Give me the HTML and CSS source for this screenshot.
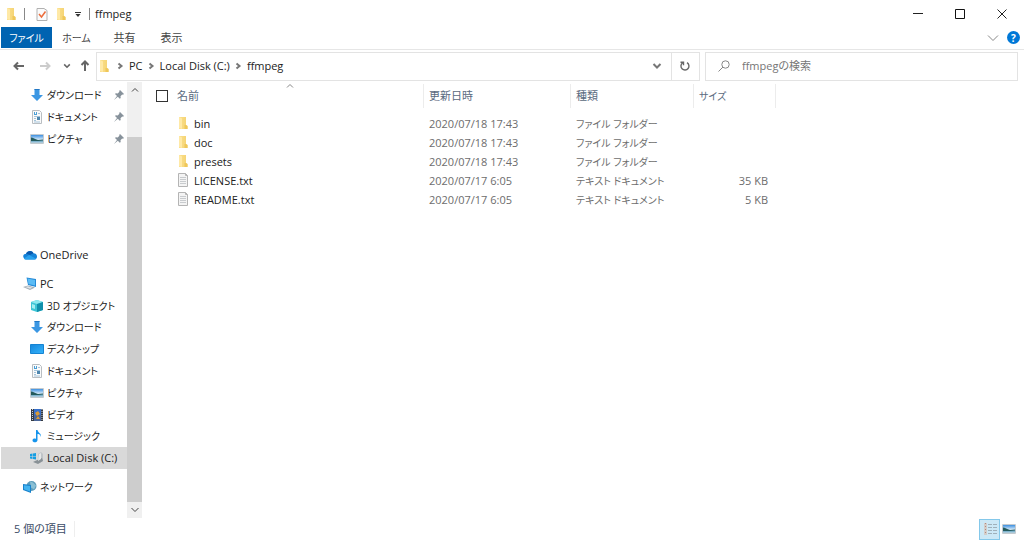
FILE: index.html
```html
<!DOCTYPE html>
<html lang="ja">
<head>
<meta charset="utf-8">
<meta name="viewport" content="width=device-width, initial-scale=1">
<title>ffmpeg</title>
<link rel="stylesheet" href="styles.css">
</head>
<body>
<svg class="sprite" aria-hidden="true">
  <defs>
    <linearGradient id="g-fold" x1="0" x2="1"><stop offset="0" stop-color="#fbe08c"/><stop offset="1" stop-color="#f4d271"/></linearGradient>
    <linearGradient id="g-blue" x1="0" x2="1" y1="0" y2="1"><stop offset="0" stop-color="#1687dc"/><stop offset="1" stop-color="#35b4fb"/></linearGradient>
    <linearGradient id="g-sky" x1="0" x2="0" y1="0" y2="1"><stop offset="0" stop-color="#3c8fe0"/><stop offset="1" stop-color="#e4f2fb"/></linearGradient>
  </defs>
  <symbol id="folder" viewBox="0 0 14 14"><path d="M3 1h7v8l1.500 1v3H3z" fill="url(#g-fold)"/><path d="M8.500 9h1.500l1.500 1v3h-3z" fill="#efc75a"/><path d="M3 1l3 1.500V13l-3-1z" fill="#ffe9a6"/></symbol>
  <symbol id="text" viewBox="0 0 14 14"><path d="M2.500.500h7l2 2v11h-9z" fill="#f4f4f4" stroke="#b4b4b4"/><path d="M9.500.500v2h2" fill="none" stroke="#b4b4b4"/><path d="M4 4.500h6M4 6.500h6M4 8.500h6M4 10.500h6" stroke="#c8cbce"/></symbol>
  <symbol id="down" viewBox="0 0 14 14"><path d="M4.500 1h5v6H13l-6 6-6-6h3.500z" fill="#3b97e3"/><path d="M4.500 1h5v1h-5z" fill="#2277c4"/></symbol>
  <symbol id="doc" viewBox="0 0 14 14"><path d="M2.500.500h7l2 2v11h-9z" fill="#fafafa" stroke="#b9bec2"/><path d="M4 2h1v3H4zM5 4h1v1H5zM6 2h1v3H6z" fill="#4c9fd6"/><path d="M8 3.500h2M4 6.500h6M4 8.500h2M4 10.500h2M4 12h6" stroke="#a5c4da"/><path d="M7 7h3v3H7z" fill="#4d86ae"/></symbol>
  <symbol id="picture" viewBox="0 0 14 14"><path d="M.5 2.500h13v9H.5z" fill="#fff" stroke="#c3cacf"/><path d="M1 3h12v5H1z" fill="url(#g-sky)"/><path d="M1 8h12v3H1z" fill="#7fb3cd"/><path d="M1 5.500c2 0 4 1.500 7 2.500l5-.5v1L8 9H1z" fill="#235a5c"/><path d="M1 10h12v1H1z" fill="#a9c9da"/></symbol>
  <symbol id="cloud" viewBox="0 0 16 14"><path d="M1 10.500c-2-3 .5-5 2.500-5C5 2 10 1 12 5c3 0 4 2 4 4 0 1.500-1 3-2.500 3H3c-1 0-1.600-.7-2-1.500" fill="#1583d8"/><path d="M3.500 5.500C5 2 10 1 12 5L8 7z" fill="#0a59ad"/><path d="M1 11l6-4 8 4.300c-.5.500-1 .7-2 .7H3c-1 0-1.500-.4-2-1" fill="#29a2ee"/></symbol>
  <symbol id="pc" viewBox="0 0 14 14"><path d="M3.500.500L13 2v8L5 8z" fill="#2589d6"/><path d="M4.500 1.500L12 3v5.500L5.500 7z" fill="#5bbcf5"/><path d="M0 10l5-1.500 7 2L7 13z" fill="#a3adb5"/><path d="M2 10l3-.8 4.500 1.500-2.500 1z" fill="#dfe3e6"/></symbol>
  <symbol id="cube" viewBox="0 0 14 14"><path d="M1 3l6-2 6 2v8l-6 2-6-2z" fill="#3cc5d6"/><path d="M1 3l6-2 6 2-6 2z" fill="#8de9ef"/><path d="M7 5l6-2v8l-6 2z" fill="#1190ab"/><path d="M2 5l3 1v4l-3-1z" fill="#a4eef0"/></symbol>
  <symbol id="desktop" viewBox="0 0 14 14"><path d="M.5 2.500h13v9H.5z" fill="url(#g-blue)" stroke="#1684d3"/></symbol>
  <symbol id="video" viewBox="0 0 14 14"><path d="M1 1h12v12H1z" fill="#343b43"/><path d="M4 1h7v6H4z" fill="#3670cb"/><path d="M4 7h7v6H4z" fill="#4b6698"/><path d="M5 5l3-2 2 3-3 2zM6 11l2-3 2 3z" fill="#dc9a32"/><path d="M2.500 1v12M12 1v12" stroke="#c8d0d7" stroke-dasharray="1 1"/></symbol>
  <symbol id="music" viewBox="0 0 14 14"><path d="M6 1h1.500c.5 3 4 3 3.500 7-1-3-2-3-3.500-3v6c0 3-5 3-5 .5C2.500 9.500 5 9 6 10z" fill="#1594ec"/></symbol>
  <symbol id="disk" viewBox="0 0 14 14"><path d="M8 3l3-2 2 2v7l-5 2z" fill="#bfc4c8"/><path d="M5 10l7-3 1 3-5 3-5-2z" fill="#899196"/><path d="M9 3l2-1v6l-3 2z" fill="#e5e7e8"/><path d="M0 3l2.500-.5V5H0zM3 2.500L6 2v3H3zM0 5.500h2.500V8L0 7.500zM3 5.500h3v3L3 8z" fill="#159ee3"/></symbol>
  <symbol id="network" viewBox="0 0 14 14"><circle cx="8.500" cy="6" r="5" fill="#5b9bb9"/><path d="M7 1.500l3 1 3 3-2 4-3-2z" fill="#8abfd4"/><path d="M0 4l8 1v8L0 10z" fill="#1681cc"/><path d="M1 5.200l6 .8v5.500L1 9.300z" fill="#43b3f0"/></symbol>
  <symbol id="pin" viewBox="0 0 10 10"><path d="M6 0l4 4-1 .7-.8-.3-1.700 1.800.2 1.800-.9.800-2-2L0 10l3-3.900-2-2 .8-.8 1.900.2 1.700-1.700-.2-.9z" fill="#87929b"/></symbol>
  <symbol id="chev-d" viewBox="0 0 10 10"><path d="M1.500 3L5 6.500 8.500 3" fill="none" stroke="currentColor"/></symbol>
  <symbol id="chev-u" viewBox="0 0 10 10"><path d="M2 6.500l3-3 3 3" fill="none" stroke="currentColor"/></symbol>
  <symbol id="chev-r" viewBox="0 0 10 10"><path d="M3.500 2.500L6.500 5l-3 2.500" fill="none" stroke="currentColor"/></symbol>
  <symbol id="arrow" viewBox="0 0 12 12"><path d="M11 6H1.500M5 2.500L1.500 6 5 9.500" fill="none" stroke="currentColor"/></symbol>
</svg>

<div class="window">
  <header class="titlebar">
    <svg class="icon"><use href="#folder"/></svg>
    <span class="rule"></span>
    <button class="quick" aria-label="プロパティ"><svg class="icon" viewBox="0 0 14 14"><path d="M2 1.500h7l3 2v10H2z" fill="#fbfbfb" stroke="#b1b1b1"/><path d="M4 7l2.500 3L10.500 4.500" fill="none" stroke="#ec6c3a" stroke-width="1.500"/></svg></button>
    <button class="quick" aria-label="新しいフォルダー"><svg class="icon"><use href="#folder"/></svg></button>
    <button class="quick" aria-label="カスタマイズ"><svg class="icon small" viewBox="0 0 10 10"><path d="M2 3.500h6" stroke="#333"/><path d="M2.500 5h5L5 8z" fill="#333"/></svg></button>
    <span class="rule dark"></span>
    <h1 class="title">ffmpeg</h1>
    <div class="controls">
      <button aria-label="最小化"><svg class="ctl" viewBox="0 0 10 10"><path d="M0 4.500h10" stroke="#222"/></svg></button>
      <button aria-label="最大化"><svg class="ctl" viewBox="0 0 10 10"><path d="M.5.500h9v9h-9z" fill="none" stroke="#111"/></svg></button>
      <button aria-label="閉じる"><svg class="ctl" viewBox="0 0 10 10"><path d="M.5.500l9 9M9.500.500l-9 9" stroke="#222"/></svg></button>
    </div>
  </header>

  <nav class="ribbon" aria-label="リボン">
    <button class="tab active kana">ファイル</button>
    <button class="tab kana">ホーム</button>
    <button class="tab">共有</button>
    <button class="tab">表示</button>
    <button class="expand" aria-label="リボンの展開"><svg class="icon" viewBox="0 0 14 14"><path d="M2 4.500l5 5 5-5" fill="none" stroke="#888"/></svg></button>
    <button class="help" aria-label="ヘルプ">?</button>
  </nav>

  <div class="address">
    <button class="nav" aria-label="戻る"><svg class="arrow"><use href="#arrow"/></svg></button>
    <button class="nav off" aria-label="進む"><svg class="arrow forward"><use href="#arrow"/></svg></button>
    <button class="nav narrow" aria-label="履歴"><svg class="mini"><use href="#chev-d"/></svg></button>
    <button class="nav narrow" aria-label="上へ"><svg class="arrow up"><use href="#arrow"/></svg></button>
    <div class="path">
      <svg class="icon"><use href="#folder"/></svg>
      <svg class="mini sep"><use href="#chev-r"/></svg><a href="#pc">PC</a>
      <svg class="mini sep"><use href="#chev-r"/></svg><a href="#c">Local Disk (C:)</a>
      <svg class="mini sep"><use href="#chev-r"/></svg><a href="#ffmpeg">ffmpeg</a>
      <button class="drop" aria-label="以前の場所"><svg class="mini heavy"><use href="#chev-d"/></svg></button>
      <button class="reload" aria-label="最新の情報に更新"><svg class="arrow" viewBox="0 0 12 12"><path d="M8 2.600A4 4 0 1 1 3.600 2.800M1.500 2.200h3v3" fill="none" stroke="#666" stroke-width="1.400"/></svg></button>
    </div>
    <label class="search">
      <svg class="lens" viewBox="0 0 12 12"><circle cx="7.500" cy="4.500" r="3.700" fill="none" stroke="#888"/><path d="M5 7L.5 11.500" stroke="#888"/></svg>
      <input type="text" placeholder="ffmpegの検索" aria-label="ffmpegの検索">
    </label>
  </div>

  <div class="body">
    <aside class="side">
      <nav class="tree" aria-label="ナビゲーション">
        <ul class="pinned">
          <li><a class="item sub kana" href="#dl"><svg class="icon"><use href="#down"/></svg><span>ダウンロード</span><svg class="pin"><use href="#pin"/></svg></a></li>
          <li><a class="item sub kana" href="#docs"><svg class="icon"><use href="#doc"/></svg><span>ドキュメント</span><svg class="pin"><use href="#pin"/></svg></a></li>
          <li><a class="item sub kana" href="#pics"><svg class="icon"><use href="#picture"/></svg><span>ピクチャ</span><svg class="pin"><use href="#pin"/></svg></a></li>
        </ul>
        <ul class="cloud">
          <li><a class="item" href="#onedrive"><svg class="icon"><use href="#cloud"/></svg><span>OneDrive</span></a></li>
        </ul>
        <ul class="machine">
          <li><a class="item" href="#pc"><svg class="icon"><use href="#pc"/></svg><span>PC</span></a></li>
          <li><a class="item sub kana" href="#objects"><svg class="icon"><use href="#cube"/></svg><span>3D オブジェクト</span></a></li>
          <li><a class="item sub kana" href="#dl"><svg class="icon"><use href="#down"/></svg><span>ダウンロード</span></a></li>
          <li><a class="item sub kana" href="#desk"><svg class="icon"><use href="#desktop"/></svg><span>デスクトップ</span></a></li>
          <li><a class="item sub kana" href="#docs"><svg class="icon"><use href="#doc"/></svg><span>ドキュメント</span></a></li>
          <li><a class="item sub kana" href="#pics"><svg class="icon"><use href="#picture"/></svg><span>ピクチャ</span></a></li>
          <li><a class="item sub kana" href="#video"><svg class="icon"><use href="#video"/></svg><span>ビデオ</span></a></li>
          <li><a class="item sub kana" href="#music"><svg class="icon"><use href="#music"/></svg><span>ミュージック</span></a></li>
          <li><a class="item sub current" href="#c"><svg class="icon"><use href="#disk"/></svg><span>Local Disk (C:)</span></a></li>
        </ul>
        <ul class="network">
          <li><a class="item kana" href="#network"><svg class="icon"><use href="#network"/></svg><span>ネットワーク</span></a></li>
        </ul>
      </nav>
      <div class="scroll">
        <button aria-label="上へスクロール"><svg class="mini"><use href="#chev-u"/></svg></button>
        <div class="thumb"></div>
        <button aria-label="下へスクロール"><svg class="mini"><use href="#chev-d"/></svg></button>
      </div>
    </aside>

    <main class="files">
      <svg class="sort mini"><use href="#chev-u"/></svg>
      <table>
        <colgroup><col class="c-check"><col class="c-name"><col class="c-date"><col class="c-type"><col class="c-size"></colgroup>
        <thead>
          <tr><th class="check"><input type="checkbox" aria-label="すべて選択"></th><th class="name">名前</th><th>更新日時</th><th>種類</th><th class="kana">サイズ</th></tr>
        </thead>
        <tbody>
          <tr><td></td><td class="name"><svg class="icon"><use href="#folder"/></svg>bin</td><td>2020/07/18 17:43</td><td class="kana">ファイル フォルダー</td><td></td></tr>
          <tr><td></td><td class="name"><svg class="icon"><use href="#folder"/></svg>doc</td><td>2020/07/18 17:43</td><td class="kana">ファイル フォルダー</td><td></td></tr>
          <tr><td></td><td class="name"><svg class="icon"><use href="#folder"/></svg>presets</td><td>2020/07/18 17:43</td><td class="kana">ファイル フォルダー</td><td></td></tr>
          <tr><td></td><td class="name"><svg class="icon"><use href="#text"/></svg>LICENSE.txt</td><td>2020/07/17 6:05</td><td class="kana">テキスト ドキュメント</td><td class="size">35 KB</td></tr>
          <tr><td></td><td class="name"><svg class="icon"><use href="#text"/></svg>README.txt</td><td>2020/07/17 6:05</td><td class="kana">テキスト ドキュメント</td><td class="size">5 KB</td></tr>
        </tbody>
      </table>
    </main>
  </div>

  <footer class="status">
    <span class="count">5 個の項目</span>
    <button class="view on" aria-label="詳細"><svg class="icon" viewBox="0 0 14 14"><path d="M1 1h3v12H1z" fill="#d4cdc9"/><path d="M2.500 1v12" stroke="#b08a82" stroke-dasharray="1 2"/><path d="M5 2.500h4M10 2.500h4M5 5.500h4M10 5.500h4M5 8.500h4M10 8.500h4M5 11.500h4M10 11.500h4" stroke="#9fb0ba"/></svg></button>
    <button class="view" aria-label="大アイコン"><svg class="icon"><use href="#picture"/></svg></button>
  </footer>
</div>
</body>
</html>
```

FILE: styles.css
```css
* { box-sizing: border-box; }
body {
  margin: 0;
  background: #fff;
  color: #222;
  font: 11px/16px "Open Sans", "Noto Sans CJK JP", sans-serif;
  font-feature-settings: "palt";
}
button { margin: 0; padding: 0; border: 0; background: none; color: inherit; font: inherit; font-feature-settings: inherit; display: flex; align-items: center; justify-content: center; }
a { color: inherit; text-decoration: none; }
ul { list-style: none; margin: 0; padding: 0; }
.kana { font-size: 10px; }
.sprite { position: absolute; width: 0; height: 0; }
.icon { width: 14px; height: 14px; flex: none; }
.mini { width: 10px; height: 10px; flex: none; }
.window { min-height: 100vh; display: flex; flex-direction: column; }

.titlebar { height: 27px; display: flex; align-items: center; padding-left: 4px; }
.rule { width: 1px; height: 12px; margin: 0 10px 0 6px; background: #888; }
.rule.dark { margin: 0 5px 0 6px; }
.quick { margin-right: 5px; }
.quick .small { width: 10px; height: 10px; }
.quick + .rule { margin-left: 1px; }
.title { margin: 0; font-size: 11px; font-weight: 400; }
.controls { margin-left: auto; display: flex; height: 27px; padding-right: 1px; }
.controls button { width: 42px; }
.ctl { width: 10px; height: 10px; }

.ribbon { height: 23px; display: flex; align-items: flex-start; padding: 0 4px 0 1px; border-bottom: 1px solid #e6e6e6; color: #444; }
.tab { height: 21px; width: 47px; }
.tab.active { width: 51px; background: #0063b1; color: #fff; }
.tab.active + .tab { width: 49px; }
.expand { width: 20px; height: 21px; margin-left: auto; }
.help { width: 13px; height: 13px; margin: 4px 0 0 4px; border-radius: 50%; background: #0078d7; color: #fff; font-size: 10px; line-height: 12px; font-weight: 700; }

.address { height: 32px; display: flex; align-items: center; padding: 0 6px 0 8px; }
.nav { width: 22px; height: 28px; color: #666; }
.nav.off { width: 30px; color: #ccc; }
.nav.narrow { width: 14px; }
.nav.narrow + .nav.narrow { width: 22px; }
.nav .mini { width: 8px; height: 8px; stroke-width: 2px; }
.arrow { width: 12px; height: 12px; stroke-width: 2px; }
.arrow.forward { transform: rotate(180deg); }
.arrow.up { transform: rotate(90deg); }
.path { flex: 1; height: 29px; display: flex; align-items: center; border: 1px solid #e3e3e3; }
.path > .icon { margin-right: 4px; }
.sep { margin: 0 4px 0 3px; color: #777; stroke-width: 2px; }
.path > .icon + .sep { margin-left: 0; }
.heavy { stroke-width: 2px; color: #777; }
.drop { width: 28px; height: 27px; margin-left: auto; }
.reload { width: 28px; height: 27px; border-left: 1px solid #e3e3e3; }
.search { width: 31%; height: 29px; margin-left: 5px; display: flex; align-items: center; border: 1px solid #e3e3e3; padding-left: 12px; }
.lens { width: 12px; height: 12px; flex: none; margin-right: 12px; }
.search input { flex: 1; min-width: 0; border: 0; padding: 0; background: none; font: inherit; color: #222; outline: 0; }
.search input::placeholder { color: #767676; opacity: 1; }

.body { flex: 1; display: flex; }
.side { width: 142px; flex: none; display: flex; }
.tree { flex: 1; padding: 2px 0 0 1px; }
.item { height: 100%; min-height: 21px; display: flex; align-items: center; gap: 3px; padding-left: 22px; white-space: nowrap; }
.item.sub { padding-left: 29px; }
.item.current { background: #d9d9d9; }
.pinned li, .cloud li, .network li { height: 22px; }
.pinned { margin-bottom: 94px; }
.cloud { margin-bottom: 7px; }
.machine { height: 196px; display: grid; grid-auto-rows: 1fr; }
.network { margin-top: 7px; }
.pin { width: 10px; height: 10px; margin: 0 3px 0 auto; }
.scroll { width: 15px; display: flex; flex-direction: column; background: #f0f0f0; color: #444; }
.scroll button { height: 16px; }
.thumb { flex: 1; margin-top: 39px; background: #cdcdcd; }

.files { flex: 1; position: relative; padding: 2px 0 0 1px; }
.sort { position: absolute; left: 143px; top: -1px; color: #888; }
table { border-collapse: separate; border-spacing: 0; table-layout: fixed; width: 633px; }
.c-check { width: 34px; }
.c-name { width: 247px; }
.c-date { width: 147px; }
.c-type { width: 123px; }
.c-size { width: 82px; }
th { height: 24px; padding: 0 0 0 5px; text-align: left; font-weight: 400; color: #5a6a80; border-right: 1px solid #ececec; }
th.check { border: 0; padding-left: 13px; }
th.check input { appearance: none; display: block; width: 12px; height: 12px; margin: 0; border: 1px solid #333; background: #fff; }
th.name { padding-left: 0; }
td { height: 19px; padding: 0 0 0 5px; color: #6d6d6d; white-space: nowrap; line-height: 16px; }
tbody::before { content: ""; display: block; height: 6px; }
td.name { color: #222; padding-left: 0; }
td.name .icon { margin: 0 4px 0 -1px; vertical-align: -2px; }
td.size { text-align: right; padding-right: 8px; }

.status { height: 22px; display: flex; align-items: center; padding: 0 7px 0 14px; color: #3b4c66; }
.count { padding-right: 7px; margin-right: auto; border-right: 1px solid #eee; }
.view { width: 21px; height: 21px; }
.view.on { background: #cce8f6; border: 1px solid #84c8ea; }
.view.on + .view { width: 17px; }
```
